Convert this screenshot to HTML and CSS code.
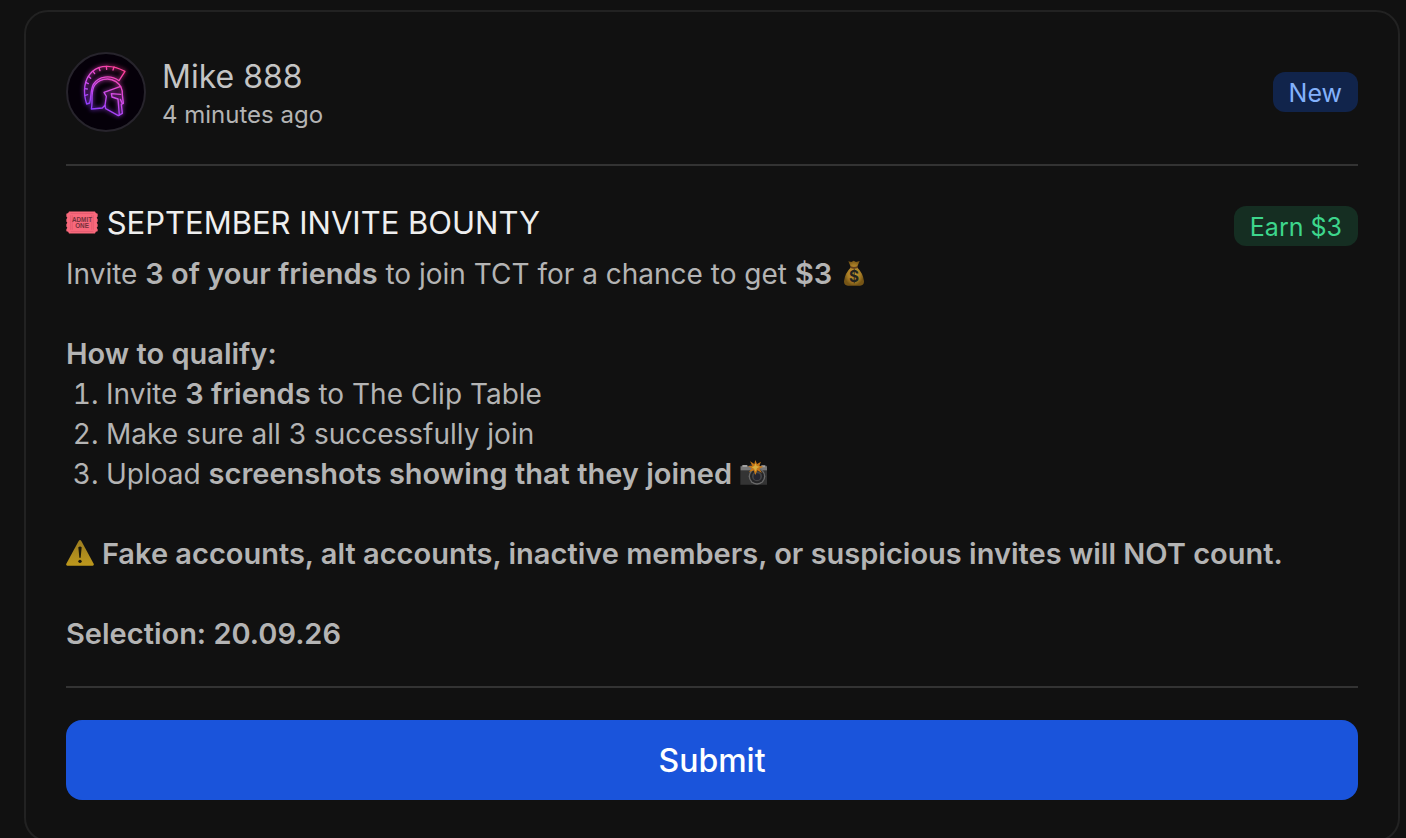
FILE: index.html
```html
<!DOCTYPE html>
<html lang="en">
<head>
<meta charset="utf-8">
<meta name="viewport" content="width=device-width, initial-scale=1">
<title>September Invite Bounty</title>
<link rel="stylesheet" href="styles.css">
</head>
<body>
<main class="page">
  <article class="card">
    <header class="card-header">
      <svg class="avatar" viewBox="30 30 240 240" role="img" aria-label="Mike 888">
        <defs>
          <linearGradient id="neon" gradientUnits="userSpaceOnUse" x1="190" y1="80" x2="110" y2="205">
            <stop offset="0" stop-color="#ff3f98"/>
            <stop offset=".5" stop-color="#d94de8"/>
            <stop offset="1" stop-color="#8a3bff"/>
          </linearGradient>
          <filter id="glow" x="-30%" y="-30%" width="160%" height="160%"><feGaussianBlur stdDeviation="6"/></filter>
          <g id="helmet">
            <path d="M92 186C80 150 84 112 108 89C134 66 172 70 207 88L189 116C164 98 128 102 112 127C103 145 106 166 101 183Z"/>
            <path d="M88 160L95 158M86 140L94 141M89 121L97 125M97 103L104 109M111 88L116 95M129 78L132 86M151 73L152 82M174 75L171 84"/>
            <path d="M106 201C111 180 104 156 113 135C126 111 158 104 180 119C194 129 200 143 199 158L202 184L196 187L199 214L187 221L149 200L147 190L139 198Z"/>
            <path d="M194 133L144 151L151 163L147 190M194 157L166 155L168 165L186 171L190 219M193 172L199 184"/>
          </g>
        </defs>
        <circle cx="150" cy="150" r="117" fill="#050009" stroke="#27242c" stroke-width="6"/>
        <g fill="none" stroke="url(#neon)" stroke-linejoin="round" stroke-linecap="round">
          <use href="#helmet" stroke-width="7" opacity=".6" filter="url(#glow)"/>
          <use href="#helmet" stroke-width="4"/>
        </g>
      </svg>
      <div class="author">
        <div class="author-name">Mike 888</div>
        <div class="author-time">4 minutes ago</div>
      </div>
      <span class="badge badge-new">New</span>
    </header>

    <section class="card-content">
      <div class="title-row">
        <h1 class="title">
          <svg class="ticket" viewBox="0 0 96 68" role="img" aria-label="Ticket">
            <path d="M9 1H87Q88 7 95 8V16L92 20L95 24V31L92 35L95 39V46L92 50L95 54V60Q88 60 87 67H9Q8 60 1 60V54L4 50L1 46V39L4 35L1 31V24L4 20L1 16V8Q8 7 9 1Z" fill="#f8687b"/>
            <path d="M14 7H82M14 61H82M14 12V56M19 12V56M77 12V56M82 12V56" fill="none" stroke="#dd586c" stroke-width="2"/>
            <text class="ticket-text" x="48" y="32">ADMIT</text>
            <text class="ticket-text" x="48" y="51">ONE</text>
          </svg>
          SEPTEMBER INVITE BOUNTY
        </h1>
        <span class="badge badge-earn">Earn $3</span>
      </div>
      <div class="description">
        <p>Invite <strong>3 of your friends</strong> to join TCT for a chance to get <strong>$3</strong>
          <svg class="emoji" viewBox="0 0 84 84" role="img" aria-label="Money bag">
            <defs><radialGradient id="bag"><stop offset="0" stop-color="#c49b36"/><stop offset=".65" stop-color="#a77d26"/><stop offset="1" stop-color="#765515"/></radialGradient></defs>
            <path d="M25 7L34 9L41 5L48 9L59 6L51 25Q69 42 72 67Q72 80 60 80H24Q12 80 12 67Q15 42 33 25Z" fill="url(#bag)"/>
            <path d="M31 24Q42 29 53 24" fill="none" stroke="#65401b" stroke-width="5"/>
            <text class="bag-text" x="42" y="70">$</text>
          </svg>
        </p>
        <div class="steps">
          <p><strong>How to qualify:</strong></p>
          <ol>
            <li>Invite <strong>3 friends</strong> to The Clip Table</li>
            <li>Make sure all 3 successfully join</li>
            <li>Upload <strong>screenshots showing that they joined</strong>
              <svg class="emoji" viewBox="0 0 84 84" role="img" aria-label="Camera with flash">
                <path d="M3 20H26L33 15H53L60 20H81V77H1V22Z" fill="#343434"/>
                <path d="M2 22H81V34H2Z" fill="#777"/>
                <path d="M7 18H22V24H7ZM64 19H76V25H64Z" fill="#a0a0a0"/>
                <circle cx="51" cy="52" r="25" fill="#686868"/>
                <circle cx="51" cy="52" r="21" fill="#252527"/>
                <circle cx="51" cy="52" r="15" fill="#454548"/>
                <circle cx="51" cy="53" r="10" fill="#252530"/>
                <path d="M46 3L51 15L63 8L58 20L70 23L58 29L66 42L52 34L46 48L41 34L27 40L35 28L24 22L37 20L30 7L43 15Z" fill="#c77717"/>
                <path d="M47 13L50 21L59 23L51 28L47 38L42 29L35 25L43 21Z" fill="#d9ad3f"/>
              </svg>
            </li>
          </ol>
        </div>
        <p>
          <svg class="emoji" viewBox="0 0 84 84" role="img" aria-label="Warning">
            <defs><linearGradient id="warn" x2="0" y2="1"><stop stop-color="#9c7d20"/><stop offset="1" stop-color="#bd981c"/></linearGradient></defs>
            <path d="M38 6Q42 0 46 6L83 74Q85 79 80 80H4Q-1 79 1 74Z" fill="url(#warn)"/>
            <path d="M37 25Q42 20 47 25L44 56H40Z" fill="#1b180b"/>
            <circle cx="42" cy="67" r="5" fill="#1b180b"/>
          </svg>
          <strong>Fake accounts, alt accounts, inactive members, or suspicious invites will NOT count.</strong>
        </p>
        <p><strong>Selection: 20.09.26</strong></p>
      </div>
    </section>
    <footer class="card-footer">
      <button class="submit" type="button">Submit</button>
    </footer>
  </article>
</main>
</body>
</html>
```

FILE: styles.css
```css
* {
  box-sizing: border-box;
}

body {
  margin: 0;
  background: #111;
  color: #b4b4b4;
  font-family: Inter, "Open Sans", sans-serif;
  font-size: 28px;
  line-height: 40px;
}

.page {
  padding: 10px 6px 0 24px;
}

.card {
  padding: 40px;
  border: 2px solid #222;
  border-radius: 24px;
}

.card-header {
  display: flex;
  align-items: center;
  gap: 16px;
  padding-bottom: 32px;
  border-bottom: 2px solid #333;
}

.avatar {
  flex: none;
  width: 80px;
  height: 80px;
}

.author {
  flex: 1;
  padding-top: 2px;
}

.author-name {
  color: #c4c4c4;
  font-size: 32px;
  line-height: 44px;
}

.author-time {
  font-size: 24px;
  line-height: 32px;
}

.badge {
  flex: none;
  padding: 2px 16px 0;
  border-radius: 12px;
  font-size: 25px;
  line-height: 38px;
}

.badge-new {
  background: #11244b;
  color: #83b1fb;
}

.badge-earn {
  background: #152e22;
  color: #3dd68c;
}

.card-content {
  padding: 40px 0 32px;
}

.title-row {
  display: flex;
  align-items: flex-start;
  justify-content: space-between;
  gap: 16px;
}

.title {
  margin: 0;
  color: #eee;
  font-size: 31px;
  font-weight: 400;
  line-height: 34px;
}

.ticket {
  width: 32px;
  height: 23px;
}

.ticket-text {
  fill: #74313c;
  font-family: "Liberation Sans", sans-serif;
  font-size: 19px;
  font-weight: 700;
  text-anchor: middle;
}

.description {
  display: flex;
  flex-direction: column;
  gap: 40px;
  margin-top: 8px;
}

.description p {
  margin: 0;
}

.description strong {
  font-size: 29px;
  font-weight: 600;
}

.description ol {
  margin: 0;
  padding-left: 40px;
}

.emoji {
  width: 28px;
  height: 28px;
  vertical-align: -3px;
}

.bag-text {
  fill: #22231f;
  font-size: 46px;
  font-weight: 700;
  text-anchor: middle;
}

.card-footer {
  padding-top: 32px;
  border-top: 2px solid #333;
}

.submit {
  display: block;
  width: 100%;
  height: 80px;
  padding: 2px 16px 0;
  border: 0;
  border-radius: 16px;
  background: #1a54db;
  color: #fff;
  font: 500 32px/40px Inter, "Open Sans", sans-serif;
  cursor: pointer;
}
```
